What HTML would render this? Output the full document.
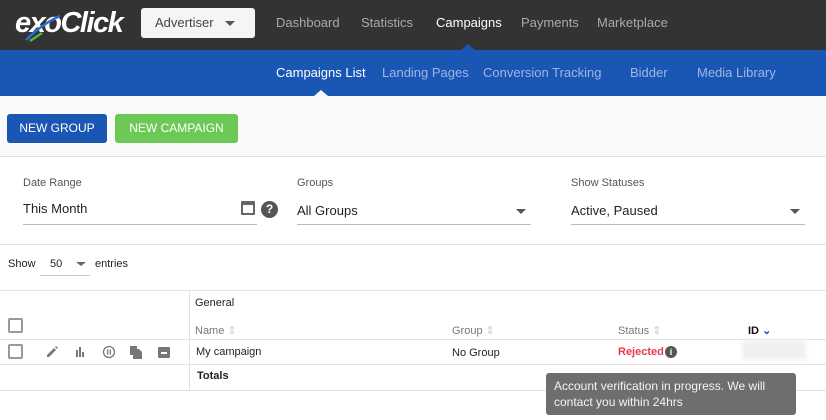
<!DOCTYPE html>
<html><head><style>
*{margin:0;padding:0;box-sizing:border-box}
body{width:826px;height:420px;overflow:hidden;background:#fafafa;font-family:"Liberation Sans",Arial,sans-serif;position:relative;color:#222}
.a{position:absolute}
.top{left:0;top:0;width:826px;height:50px;background:#333}
.nav{top:15px;font-size:13px;color:#aaa}
.blue{left:0;top:50px;width:826px;height:46px;background:#1a56b4}
.sub{top:65px;font-size:13px;color:#9fb6e2}
.btn{border-radius:3px;color:#fff;font-size:12px;text-align:center;line-height:29px;height:29px}
.lbl{font-size:11px;color:#555}
.val{font-size:13px;color:#222}
.line{height:1px;background:#bbb}
.hr{height:1px;background:#e2e2e2;left:0;width:826px}
.cb{width:15px;height:15px;border:2px solid #999;border-radius:2px}
.th{font-size:11px;color:#777}
</style></head><body>
<div class="a top"></div>
<div class="a" style="left:15px;top:7px;font-size:29px;font-style:italic;font-weight:bold;color:#fff;letter-spacing:-1.5px">exoClick</div>
<svg class="a" style="left:22px;top:10px" width="50" height="36"><path d="M4 30 Q20 14 38 6" stroke="#2a6fd0" stroke-width="2.5" fill="none"/><path d="M8 31 L20 23" stroke="#4cb848" stroke-width="2.5"/></svg>
<div class="a" style="left:141px;top:8px;width:114px;height:30px;background:#f5f5f5;border-radius:3px;font-size:13px;color:#444;line-height:30px;padding-left:14px">Advertiser</div>
<div class="a" style="left:225px;top:21px;border-left:5px solid transparent;border-right:5px solid transparent;border-top:5px solid #555"></div>
<div class="a nav" style="left:276px">Dashboard</div>
<div class="a nav" style="left:361px">Statistics</div>
<div class="a nav" style="left:436px;color:#fff">Campaigns</div>
<div class="a nav" style="left:521px">Payments</div>
<div class="a nav" style="left:597px">Marketplace</div>
<div class="a blue"></div>
<div class="a" style="left:461px;top:44px;border-left:7px solid transparent;border-right:7px solid transparent;border-bottom:6px solid #1a56b4"></div>
<div class="a sub" style="left:276px;color:#fff">Campaigns List</div>
<div class="a sub" style="left:382px">Landing Pages</div>
<div class="a sub" style="left:483px">Conversion Tracking</div>
<div class="a sub" style="left:630px">Bidder</div>
<div class="a sub" style="left:697px">Media Library</div>
<div class="a" style="left:314px;top:90px;border-left:7px solid transparent;border-right:7px solid transparent;border-bottom:6px solid #fafafa"></div>
<div class="a btn" style="left:7px;top:114px;width:100px;background:#1a56b4">NEW GROUP</div>
<div class="a btn" style="left:115px;top:114px;width:123px;background:#6cc955">NEW CAMPAIGN</div>
<div class="a hr" style="top:156px"></div>
<div class="a" style="left:0;top:157px;width:826px;height:87px;background:#fff"></div>
<div class="a lbl" style="left:23px;top:177px">Date Range</div>
<div class="a val" style="left:23px;top:201px">This Month</div>
<div class="a line" style="left:23px;top:224px;width:234px"></div>
<div class="a" style="left:241px;top:201px;width:14px;height:14px;border:2px solid #666;border-top-width:4px;border-radius:1px"></div>
<div class="a" style="left:261px;top:201px;width:17px;height:17px;border-radius:50%;background:#555;color:#fff;font-size:12px;font-weight:bold;text-align:center;line-height:17px">?</div>
<div class="a lbl" style="left:297px;top:177px">Groups</div>
<div class="a val" style="left:297px;top:203px">All Groups</div>
<div class="a" style="left:516px;top:209px;border-left:5px solid transparent;border-right:5px solid transparent;border-top:5px solid #555"></div>
<div class="a line" style="left:297px;top:224px;width:234px"></div>
<div class="a lbl" style="left:571px;top:177px">Show Statuses</div>
<div class="a val" style="left:571px;top:203px">Active, Paused</div>
<div class="a" style="left:790px;top:209px;border-left:5px solid transparent;border-right:5px solid transparent;border-top:5px solid #555"></div>
<div class="a line" style="left:571px;top:224px;width:234px"></div>
<div class="a hr" style="top:244px"></div>
<div class="a" style="left:0;top:245px;width:826px;height:175px;background:#fff"></div>
<div class="a" style="left:8px;top:258px;font-size:11px">Show</div>
<div class="a" style="left:50px;top:258px;font-size:11px">50</div>
<div class="a" style="left:76px;top:262px;border-left:5px solid transparent;border-right:5px solid transparent;border-top:4px solid #666"></div>
<div class="a line" style="left:40px;top:275px;width:50px;background:#ccc"></div>
<div class="a" style="left:95px;top:258px;font-size:11px">entries</div>
<div class="a hr" style="top:290px"></div>
<div class="a" style="left:189px;top:290px;width:1px;height:101px;background:#e2e2e2"></div>
<div class="a th" style="left:195px;top:297px;color:#222">General</div>
<div class="a cb" style="left:8px;top:318px"></div>
<div class="a th" style="left:195px;top:324px">Name <span style="color:#ccc">⇕</span></div>
<div class="a th" style="left:452px;top:324px">Group <span style="color:#ccc">⇕</span></div>
<div class="a th" style="left:618px;top:324px">Status <span style="color:#ccc">⇕</span></div>
<div class="a th" style="left:748px;top:324px;color:#111;font-weight:bold">ID <span style="color:#1a56b4">⌄</span></div>
<div class="a hr" style="top:339px"></div>
<div class="a cb" style="left:8px;top:344px"></div>
<svg class="a" style="left:45px;top:345px" width="140" height="14" fill="#777">
<path d="M2 12 L2 10 L9 3 L11 5 L4 12Z M10 2 L11 1 L13 3 L12 4Z"/>
<rect x="31" y="5" width="2" height="7"/><rect x="34" y="2" width="2" height="10"/><rect x="37" y="7" width="2" height="5"/>
<circle cx="64" cy="7" r="5.5" fill="none" stroke="#777" stroke-width="1.3"/><rect x="62" y="4.5" width="1.3" height="5"/><rect x="64.7" y="4.5" width="1.3" height="5"/>
<rect x="85" y="1" width="7" height="9"/><path d="M88 4 L94 4 L97 7 L97 14 L88 14Z"/>
<rect x="113" y="2" width="12" height="11" rx="1"/><rect x="116" y="7" width="6" height="2" fill="#fff"/>
</svg>
<div class="a" style="left:196px;top:346px;font-size:11px">My campaign</div>
<div class="a" style="left:452px;top:347px;font-size:11px">No Group</div>
<div class="a" style="left:618px;top:346px;font-size:11px;color:#e8394f;font-weight:bold">Rejected</div>
<div class="a" style="left:665px;top:346px;width:12px;height:12px;border-radius:50%;background:#555;color:#fff;font-size:9px;font-weight:bold;text-align:center;line-height:12px">i</div>
<div class="a" style="left:742px;top:341px;width:64px;height:18px;background:#f0f0f0;filter:blur(2px)"></div>
<div class="a hr" style="top:364px"></div>
<div class="a" style="left:197px;top:370px;font-size:11px;font-weight:bold">Totals</div>
<div class="a hr" style="top:390px"></div>
<div class="a" style="left:546px;top:373px;width:250px;height:42px;background:#6e6e6e;border-radius:3px;color:#f4f4f4;font-size:12px;line-height:16px;padding:5px 8px">Account verification in progress. We will<br>contact you within 24hrs</div>
</body></html>
